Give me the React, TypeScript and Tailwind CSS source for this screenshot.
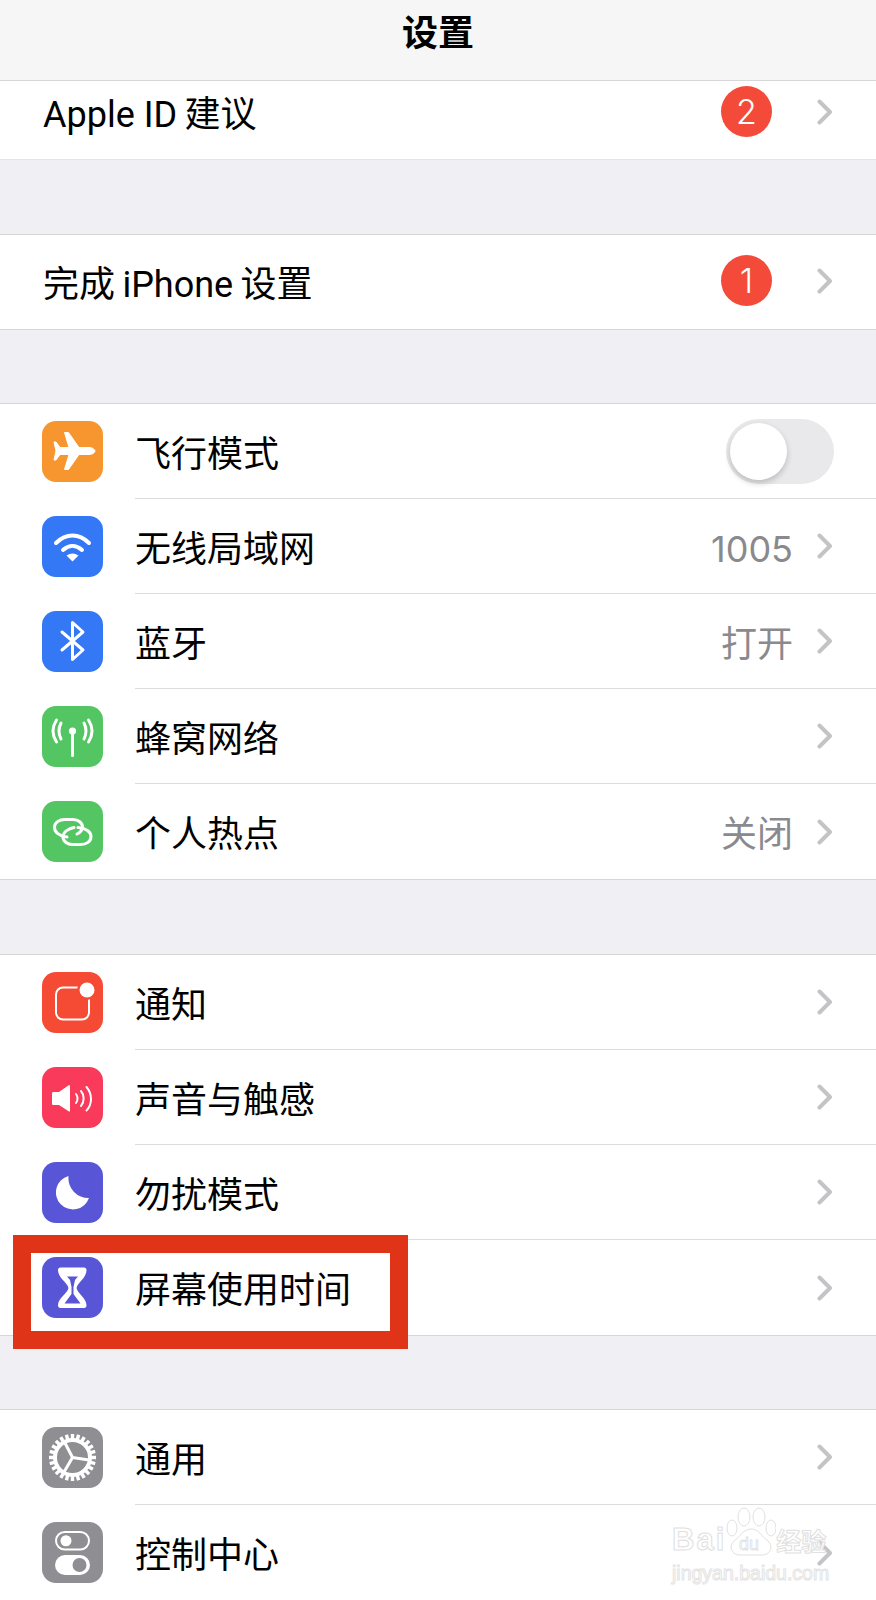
import type { ReactNode } from "react";

const Chevron = () => (
  <svg width="16" height="26" viewBox="0 0 16 26" fill="none" className="shrink-0">
    <path d="M2.5 2.5 L13 13 L2.5 23.5" stroke="#c4c4c7" strokeWidth="4" strokeLinecap="round" strokeLinejoin="round" />
  </svg>
);

const Badge = ({ n }: { n: string }) => (
  <span className="flex h-[51px] w-[51px] items-center justify-center rounded-full bg-[#f44a3a] font-['Inter',sans-serif] text-[34px] font-light text-white">
    {n}
  </span>
);

const AppIcon = ({ bg, children }: { bg: string; children: ReactNode }) => (
  <div className={`h-[61px] w-[61px] shrink-0 overflow-hidden rounded-[14px] ${bg}`}>
    <svg width="61" height="61" viewBox="0 0 61 61" fill="none">
      {children}
    </svg>
  </div>
);

const Row = ({
  icon,
  label,
  value,
  right,
  last,
}: {
  icon: ReactNode;
  label: string;
  value?: string;
  right?: ReactNode;
  last?: boolean;
}) => (
  <div className="flex h-[95px] items-center pl-[42px]">
    {icon}
    <div
      className={`ml-[32px] flex h-full flex-1 items-center justify-between pr-[43px] ${last ? "" : "border-b border-[#dcdcde]"}`}
    >
      <span className="mt-[5px] text-[36px] text-black">{label}</span>
      {right ?? (
        <div className="flex items-center gap-[24px]">
          {value && <span className="mt-[5px] text-[36px] text-[#8a8a8e]">{value}</span>}
          <Chevron />
        </div>
      )}
    </div>
  </div>
);

const Toggle = () => (
  <div className="mr-[-1px] flex h-[65px] w-[108px] items-center rounded-full bg-[#e9e9eb] pl-[4px]">
    <div className="h-[57px] w-[57px] rounded-full bg-white shadow-[0_3px_6px_rgba(0,0,0,0.2)]" />
  </div>
);

const Group = ({ className, children }: { className: string; children: ReactNode }) => (
  <div className={`border-y border-[#d6d6d8] bg-white ${className}`}>{children}</div>
);

const Plane = () => (
  <path
    d="M47 26.5 H37 L26.5 11.5 H22.5 L27 26.5 H18 L14 21 H12 L14 30 L12 39 H14 L18 33.5 H27 L22.5 48.5 H26.5 L37 33.5 H47 C51 33.5 53 31 53 30 C53 29 51 26.5 47 26.5 Z"
    fill="white"
    stroke="white"
    strokeWidth="1"
    strokeLinejoin="round"
  />
);

const Wifi = () => (
  <g>
    <path d="M14 27 C24 17 37 17 47 27" stroke="white" strokeWidth="4" strokeLinecap="round" />
    <path d="M21 34 C27 28.5 34 28.5 40 34" stroke="white" strokeWidth="4" strokeLinecap="round" />
    <path d="M24.5 39.5 Q30.5 35.5 36.5 39.5 L30.5 45.5 Z" fill="white" />
  </g>
);

const Bluetooth = () => (
  <path
    d="M20 21 L41 39 L30.5 48.5 V11.5 L41 21 L20 39"
    stroke="white"
    strokeWidth="3"
    strokeLinecap="round"
    strokeLinejoin="round"
  />
);

const Cellular = () => (
  <g stroke="white" strokeLinecap="round">
    <path d="M30.5 26 V49.5" strokeWidth="3" />
    <path d="M19 17 C16.5 22 16.5 28 19 33" strokeWidth="3" />
    <path d="M42 17 C44.5 22 44.5 28 42 33" strokeWidth="3" />
    <path d="M14.5 14 C10 21 10 29 14.5 36" strokeWidth="3" />
    <path d="M46.5 14 C51 21 51 29 46.5 36" strokeWidth="3" />
    <circle cx="30.5" cy="25" r="3.6" fill="white" stroke="none" />
  </g>
);

const Hotspot = () => (
  <g stroke="white" strokeWidth="3" strokeLinecap="round">
    <path d="M25 36 C17 35 12.5 31 12.5 26.5 C12.5 21.5 17 18.5 23 18.5 H31 C36.5 18.5 40.5 22 40.5 26 C40.5 29 38 31.5 35 33" />
    <path d="M36 26.5 C44 27 49 31 49 35.5 C49 40.5 44.5 43.5 38.5 43.5 H30.5 C25 43.5 21 40 21 36 C21 33 23.5 30 26.5 28.5 C28 27.5 30 27 32 26.5" />
  </g>
);

const Bell = () => (
  <g>
    <rect x="14" y="15.5" width="33" height="32" rx="7" stroke="white" strokeWidth="2" />
    <circle cx="45" cy="18" r="10" fill="#f54a33" />
    <circle cx="45" cy="18" r="7.5" fill="white" />
  </g>
);

const Speaker = () => (
  <g>
    <path d="M11 25 H17 L27 18 C28 18 28 19 28 20 V43 C28 44 28 45 27 44.5 L17 38 H11 C10 38 10 37 10 36 V27 C10 26 10 25 11 25 Z" fill="white" />
    <path d="M34 27 C36 29.5 36 33.5 34 36" stroke="white" strokeWidth="2" strokeLinecap="round" />
    <path d="M39 24 C42.5 28 42.5 35 39 39" stroke="white" strokeWidth="2" strokeLinecap="round" />
    <path d="M44.5 20 C50.5 27 50.5 37 44.5 43.5" stroke="white" strokeWidth="2" strokeLinecap="round" />
  </g>
);

const Moon = () => <path d="M26.5 14 A17 17 0 1 0 47 36 A20 20 0 0 1 26.5 14 Z" fill="white" />;

const Hourglass = () => (
  <g>
    <path
      d="M18.5 10.5 H42 C43.5 10.5 44.5 11.5 44.5 13 C44.5 21 36 25 34.5 31 C36 37 44.5 41 44.5 48.5 C44.5 50 43.5 51 42 51 H18.5 C17 51 16 50 16 48.5 C16 41 25 37 26.5 31 C25 25 16 21 16 13 C16 11.5 17 10.5 18.5 10.5 Z"
      fill="white"
    />
    <path d="M25 19.5 H36 L33 23 L31.5 30 V37 L38.5 46.5 H22.5 L29.5 37 V30 L28 23 Z" fill="#5856d6" />
  </g>
);

const Gear = () => (
  <g stroke="white" strokeLinecap="butt">
    <circle cx="30.5" cy="30.5" r="17.5" strokeWidth="4" />
    {Array.from({ length: 24 }).map((_, i) => {
      const a = (i * Math.PI) / 12;
      return (
        <line
          key={i}
          x1={30.5 + 18 * Math.cos(a)}
          y1={30.5 + 18 * Math.sin(a)}
          x2={30.5 + 23.5 * Math.cos(a)}
          y2={30.5 + 23.5 * Math.sin(a)}
          strokeWidth="3.4"
        />
      );
    })}
    <path d="M30.5 30.5 L23 16 M30.5 30.5 L47 33 M30.5 30.5 L22 45" strokeWidth="3" />
  </g>
);

const Switches = () => (
  <g>
    <rect x="14" y="10" width="33" height="17.5" rx="8.75" stroke="white" strokeWidth="2" />
    <circle cx="24" cy="18.75" r="5.5" fill="white" />
    <rect x="13" y="33" width="35" height="20" rx="10" fill="white" />
    <circle cx="37.5" cy="43" r="7" fill="#8e8e93" />
  </g>
);

const Watermark = () => (
  <div className="absolute left-[672px] top-[1505px] w-[162px] font-['Liberation_Sans',sans-serif] text-white">
    <div className="flex h-[52px] items-end">
      <span className="text-[31px] font-bold leading-[34px] tracking-[2px] [-webkit-text-stroke:1px_#e0e0e0]">Bai</span>
      <svg width="50" height="52" viewBox="0 0 50 52" fill="none" stroke="#e0e0e0" strokeWidth="1">
        <ellipse cx="18" cy="12" rx="6" ry="9" />
        <ellipse cx="33" cy="12" rx="6" ry="9" />
        <ellipse cx="6" cy="23" rx="5" ry="8" />
        <ellipse cx="45" cy="23" rx="5" ry="8" />
        <path d="M25 24 C17 24 14 32 8 36 C2 42 6 50 14 50 H36 C44 50 48 42 42 36 C36 32 33 24 25 24 Z" />
        <text x="13" y="45" fontSize="18" fill="white" stroke="#e0e0e0" strokeWidth="0.8">du</text>
      </svg>
      <span className="font-['Noto_Sans_CJK_SC',sans-serif] text-[25px] font-bold leading-[34px] [-webkit-text-stroke:1px_#e0e0e0]">经验</span>
    </div>
    <div className="mt-[5px] whitespace-nowrap text-[19.5px] leading-[22px] [-webkit-text-stroke:1px_#e4e4e4]">jingyan.baidu.com</div>
  </div>
);

export default function App() {
  return (
    <div className="relative h-[1600px] w-[876px] overflow-hidden bg-[#efeff4] font-['Inter','Noto_Sans_CJK_SC',sans-serif]">
      {/* nav */}
      <div className="flex h-[81px] items-center justify-center border-b border-[#d6d6d8] bg-[#f6f6f6] pb-[14px]">
        <span className="text-[36px] font-semibold text-black">设置</span>
      </div>

      <div className="flex h-[79px] items-center justify-between border-b border-[#e4e4e6] bg-white pb-[17px] pl-[43px] pr-[43px]">
        <span className="mt-[6px] font-['Roboto','Noto_Sans_CJK_SC',sans-serif] text-[36px] text-black">Apple ID{"\u2009"}建议</span>
        <div className="flex items-center gap-[45px]">
          <Badge n="2" />
          <Chevron />
        </div>
      </div>

      <Group className="mt-[74px]">
        <div className="flex h-[94px] items-center justify-between pb-[3px] pl-[43px] pr-[43px]">
          <span className="mt-[8px] font-['Roboto','Noto_Sans_CJK_SC',sans-serif] text-[36px] text-black">完成{"\u2009"}iPhone{"\u2009"}设置</span>
          <div className="flex items-center gap-[45px]">
            <Badge n="1" />
            <Chevron />
          </div>
        </div>
      </Group>

      <Group className="mt-[73px]">
        <Row icon={<AppIcon bg="bg-[#f7962f]"><Plane /></AppIcon>} label="飞行模式" right={<Toggle />} />
        <Row icon={<AppIcon bg="bg-[#3478f6]"><Wifi /></AppIcon>} label="无线局域网" value="1005" />
        <Row icon={<AppIcon bg="bg-[#3478f6]"><Bluetooth /></AppIcon>} label="蓝牙" value="打开" />
        <Row icon={<AppIcon bg="bg-[#53c563]"><Cellular /></AppIcon>} label="蜂窝网络" />
        <Row icon={<AppIcon bg="bg-[#53c563]"><Hotspot /></AppIcon>} label="个人热点" value="关闭" last />
      </Group>

      <Group className="mt-[74px]">
        <Row icon={<AppIcon bg="bg-[#f54a33]"><Bell /></AppIcon>} label="通知" />
        <Row icon={<AppIcon bg="bg-[#f93a5a]"><Speaker /></AppIcon>} label="声音与触感" />
        <Row icon={<AppIcon bg="bg-[#5856d6]"><Moon /></AppIcon>} label="勿扰模式" />
        <Row icon={<AppIcon bg="bg-[#5856d6]"><Hourglass /></AppIcon>} label="屏幕使用时间" last />
      </Group>

      <Group className="mt-[73px]">
        <Row icon={<AppIcon bg="bg-[#8e8e93]"><Gear /></AppIcon>} label="通用" />
        <Row icon={<AppIcon bg="bg-[#8e8e93]"><Switches /></AppIcon>} label="控制中心" last />
      </Group>

      {/* red annotation box + watermark sit on top of the screenshot */}
      <div className="absolute left-[13px] top-[1235px] h-[114px] w-[395px] border-[18px] border-[#e03418]" />
      <Watermark />
    </div>
  );
}
